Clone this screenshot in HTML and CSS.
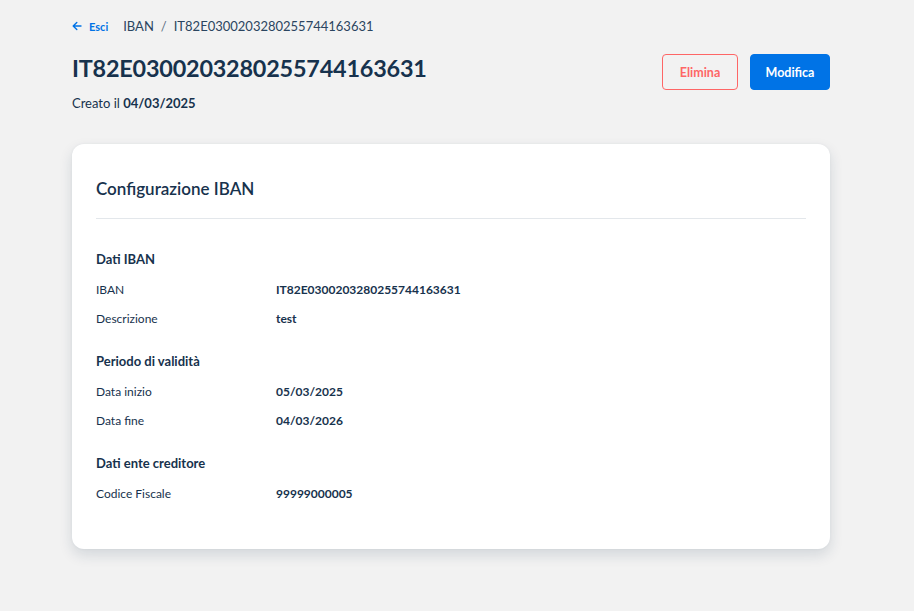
FILE: index.html
```html
<!DOCTYPE html>
<html lang="it">
<head>
<meta charset="utf-8">
<title>IBAN</title>
<link rel="stylesheet" href="styles.css">
</head>
<body>
<div class="page">
  <nav class="breadcrumb">
    <a class="back" href="#">
      <svg width="10" height="10" viewBox="0 0 10 10" fill="none" stroke="#0073E6" stroke-width="1.4" stroke-linecap="round" stroke-linejoin="round"><path d="M9 5H1.3M4.8 1.4L1.2 5l3.6 3.6"/></svg>
      <span>Esci</span>
    </a>
    <span class="crumb">IBAN</span>
    <span class="sep">/</span>
    <span class="crumb">IT82E0300203280255744163631</span>
  </nav>
  <header class="head">
    <div class="head-text">
      <h1 class="title">IT82E0300203280255744163631</h1>
      <p class="created">Creato il <strong>04/03/2025</strong></p>
    </div>
    <div class="actions">
      <button class="btn btn-outline">Elimina</button>
      <button class="btn btn-primary">Modifica</button>
    </div>
  </header>
  <section class="card">
    <h2 class="card-title">Configurazione IBAN</h2>
    <div class="group">
      <h3 class="group-title">Dati IBAN</h3>
      <div class="row"><span class="label">IBAN</span><span class="value">IT82E0300203280255744163631</span></div>
      <div class="row"><span class="label">Descrizione</span><span class="value">test</span></div>
    </div>
    <div class="group">
      <h3 class="group-title">Periodo di validità</h3>
      <div class="row"><span class="label">Data inizio</span><span class="value">05/03/2025</span></div>
      <div class="row"><span class="label">Data fine</span><span class="value">04/03/2026</span></div>
    </div>
    <div class="group">
      <h3 class="group-title">Dati ente creditore</h3>
      <div class="row"><span class="label">Codice Fiscale</span><span class="value">99999000005</span></div>
    </div>
  </section>
</div>
</body>
</html>
```
FILE: styles.css
```css
* { box-sizing: border-box; }
html, body { margin: 0; padding: 0; }
body {
  background: #F2F2F2;
  font-family: Lato, "Noto Sans", "Liberation Sans", sans-serif;
  color: #17324D;
  width: 914px;
  height: 611px;
  overflow: hidden;
}
.page {
  width: 758px;
  margin-left: 72px;
  padding-top: 17px;
}
.breadcrumb {
  display: flex;
  align-items: center;
  height: 18px;
  font-size: 13px;
  color: #17324D;
}
.back {
  display: flex;
  align-items: center;
  gap: 7px;
  text-decoration: none;
  color: #0073E6;
  font-size: 11px;
  font-weight: 700;
  margin-right: 15px;
}
.crumb { color: #2B4560; }
.sep { color: #5C6F82; margin: 0 7px 0 7px; }
.head {
  display: flex;
  justify-content: space-between;
  align-items: flex-start;
  margin-top: 19px;
}
.title {
  margin: 0;
  font-size: 23.4px;
  font-weight: 700;
  line-height: 28px;
  letter-spacing: -0.2px;
  color: #17324D;
}
.created {
  margin: 12px 0 0;
  font-size: 13px;
  line-height: 18px;
}
.created strong { font-weight: 700; }
.actions {
  display: flex;
  gap: 12px;
  margin-top: 0;
}
.btn {
  height: 36px;
  border-radius: 4px;
  font-family: inherit;
  font-size: 12.5px;
  font-weight: 700;
  cursor: pointer;
}
.btn-outline {
  width: 76px;
  background: transparent;
  border: 1px solid #FE6666;
  color: #FE6666;
}
.btn-primary {
  width: 80px;
  background: #0073E6;
  border: 1px solid #0073E6;
  color: #FFFFFF;
}
.card {
  margin-top: 32px;
  background: #FFFFFF;
  border-radius: 12px;
  box-shadow: 0 6px 14px rgba(23, 50, 77, 0.14), 0 0 3px rgba(23, 50, 77, 0.05);
  padding: 24px 24px 43px;
  height: 405px;
}
.card-title {
  margin: 0;
  font-size: 17px;
  font-weight: 600;
  line-height: 42px;
  padding-bottom: 8px;
  border-bottom: 1px solid #E3E7EB;
}
.group { margin-top: 24px; }
.group + .group { margin-top: 12px; }
.group-title {
  margin: 0;
  font-size: 13px;
  font-weight: 700;
  line-height: 32px;
}
.row {
  display: flex;
  align-items: center;
  height: 29px;
  font-size: 12px;
}
.label {
  width: 180px;
  color: #17324D;
}
.value {
  font-weight: 700;
  font-size: 12px;
}
```
